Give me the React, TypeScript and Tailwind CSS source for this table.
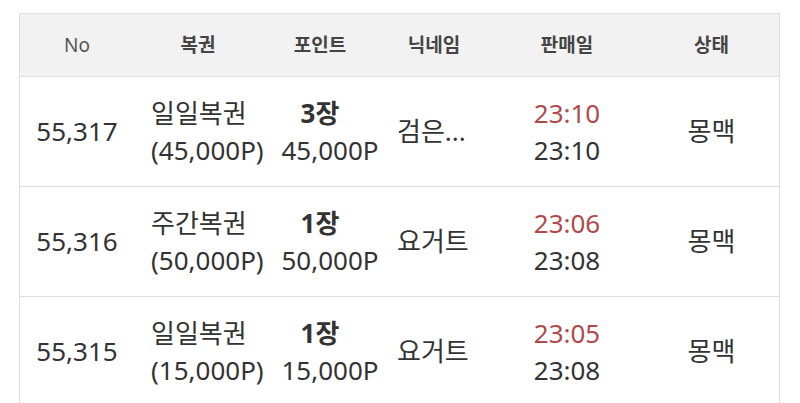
const rows = [
  { no: '55,317', ticket: '일일복권', price: '(45,000P)', count: '3장', point: '45,000P', nick: '검은...', sold: '23:10', done: '23:10', state: '몽맥' },
  { no: '55,316', ticket: '주간복권', price: '(50,000P)', count: '1장', point: '50,000P', nick: '요거트', sold: '23:06', done: '23:08', state: '몽맥' },
  { no: '55,315', ticket: '일일복권', price: '(15,000P)', count: '1장', point: '15,000P', nick: '요거트', sold: '23:05', done: '23:08', state: '몽맥' },
];

const cols = 'grid grid-cols-[114px_128px_116px_112px_154px_135px]';

export default function App() {
  return (
    <div className="min-h-[403px] w-[800px] overflow-hidden bg-white font-['Noto_Sans','Noto_Sans_CJK_KR',sans-serif] text-[#333]">
      <div className="ml-[19px] mt-[13px] w-[761px] border border-[#dedede]">
        {/* Header */}
        <div className={`${cols} h-[63px] items-center border-b border-[#dedede] bg-[#f2f2f2] text-[19px] text-[#444]`}>
          <div className="text-center text-[#555]">No</div>
          <div className="text-center font-bold">복권</div>
          <div className="text-center font-bold">포인트</div>
          <div className="text-center font-bold">닉네임</div>
          <div className="text-center font-bold">판매일</div>
          <div className="text-center font-bold">상태</div>
        </div>

        {/* Rows */}
        {rows.map((r) => (
          <div key={r.no} className={`${cols} h-[110px] items-center border-b border-[#dedede] text-[26px] leading-[37px]`}>
            <div className="text-center">{r.no}</div>
            <div className="pl-[17px] whitespace-nowrap">
              <div>{r.ticket}</div>
              <div>{r.price}</div>
            </div>
            <div className="whitespace-nowrap">
              <div className="flex justify-center font-bold">{r.count}</div>
              <div className="flex justify-center pl-[20px]">{r.point}</div>
            </div>
            <div className="pl-[19px] whitespace-nowrap">{r.nick}</div>
            <div className="text-center">
              <div className="text-[#b04a4c]">{r.sold}</div>
              <div>{r.done}</div>
            </div>
            <div className="text-center">{r.state}</div>
          </div>
        ))}
      </div>
    </div>
  );
}
